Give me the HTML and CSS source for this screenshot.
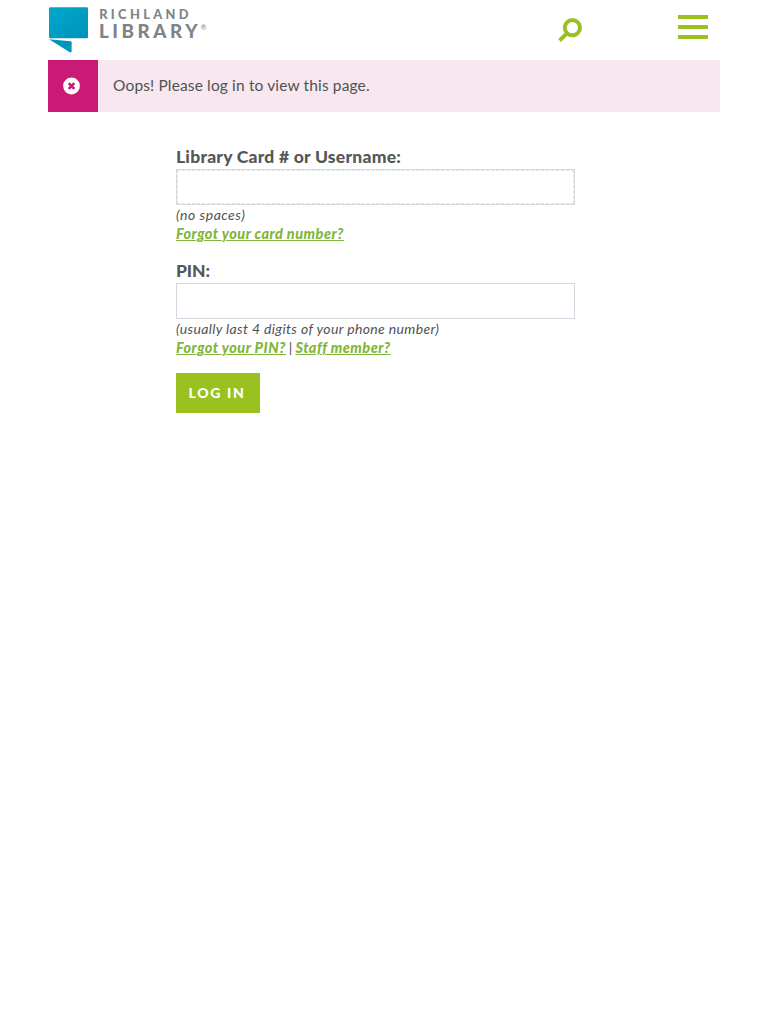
FILE: index.html
```html
<!DOCTYPE html>
<html lang="en">
<head>
<meta charset="utf-8">
<title>Richland Library</title>
<link rel="stylesheet" href="styles.css">
</head>
<body>
<header class="header">
  <a class="logo" aria-label="Richland Library">
    <svg width="160" height="60" viewBox="0 0 160 60">
      <defs>
        <linearGradient id="page" x1="0" y1="0" x2="1" y2="1"><stop offset="0" stop-color="#00a9cf"/><stop offset="1" stop-color="#0091b8"/></linearGradient>
      </defs>
      <rect x="1" y="7.2" width="39" height="31" rx="1.3" fill="url(#page)"/>
      <path d="M1 39.2 L22.6 41.2 Q23.6 41.3 23.6 42.3 L23.6 51 Q23.6 53 21.8 52.2 Z" fill="#0096bc"/>
      <g class="logo-text">
        <text class="logo-top" x="51.2" y="18.6" textLength="89.3">RICHLAND</text>
        <text class="logo-main" x="51" y="38" textLength="98.5">LIBRARY</text>
        <text class="logo-mark" x="152.5" y="29.5">®</text>
      </g>
    </svg>
  </a>
  <div class="actions">
    <svg class="search" width="26" height="26" viewBox="0 0 26 26">
      <circle cx="14.4" cy="10.7" r="7.6"/>
      <path d="M9.4 15.9 L1.6 23.5"/>
    </svg>
    <div class="menu"><span></span><span></span><span></span></div>
  </div>
</header>
<div class="alert">
  <div class="alert-icon">
    <svg width="18" height="18" viewBox="0 0 18 18"><circle cx="8.5" cy="9" r="8.4" fill="#fff"/><path d="M5.7 6.2 L11.3 11.8 M11.3 6.2 L5.7 11.8" stroke="#c91a75" stroke-width="2.6"/></svg>
  </div>
  <p class="alert-text"><span class="oops">Oops! Please log in to view this page.</span></p>
</div>
<form class="login">
  <label class="label label-card" for="card">Library Card # or Username:</label>
  <div class="field focused"><input id="card" type="text"></div>
  <div class="help"><span class="spaces">(no spaces)</span><br><a class="link-card">Forgot your card number?</a></div>
  <label class="label label-pin" for="pin">PIN:</label>
  <div class="field"><input id="pin" type="password"></div>
  <div class="help"><span class="digits">(usually last 4 digits of your phone number)</span><br><a class="link-pin">Forgot your PIN?</a><span class="bar">|</span><a class="link-staff">Staff member?</a></div>
  <button class="submit" type="button">LOG IN</button>
</form>
</body>
</html>
```
FILE: styles.css
```css
* { box-sizing: border-box; }
body { margin: 0; background: #fff; color: #4f5254; font-family: Lato, sans-serif; }
.header { height: 60px; padding: 0 60px 0 48px; display: flex; justify-content: space-between; }
.logo svg { display: block; }
.logo-text { fill: #808488; font-weight: 900; }
.logo-top { font-size: 12.8px; }
.logo-main { font-size: 18.8px; }
.logo-mark { font-size: 7.5px; font-weight: 400; }
.actions { display: flex; gap: 94px; }
.search { margin-top: 17px; fill: none; stroke: #99c221; stroke-width: 4; }
.menu { width: 30px; padding-top: 15px; display: flex; flex-direction: column; gap: 6px; }
.menu span { height: 4px; background: #99c221; }
.alert { height: 52px; margin: 0 48px; display: flex; background: #f8e7ee; }
.alert-icon { width: 50px; padding: 17px 0 0 15px; background: #c91a75; }
.alert-text { margin: 0; padding-left: 15px; font-size: 15.5px; line-height: 51px; }
.oops { letter-spacing: 0.14px; }
.login { width: 399px; margin: 34px 0 0 176px; }
.label { display: block; height: 23px; font-size: 17.5px; font-weight: 900; line-height: 22px; color: #55585a; white-space: nowrap; }
.label-card { letter-spacing: 0.24px; }
.label-pin { letter-spacing: -0.1px; }
.field { height: 36px; border: 1px solid #d3d8df; }
.field input { display: block; width: 100%; height: 100%; border: 0; outline: 0; padding: 0 8px; background: transparent; font: inherit; }
.focused input { border: 1px dashed #e0e3e7; }
.help { height: 55px; font-size: 14px; font-style: italic; line-height: 19px; white-space: nowrap; }
.spaces { letter-spacing: 0.53px; }
.digits { letter-spacing: 0.35px; }
.help a { color: #82b53b; font-size: 14.5px; font-weight: 900; line-height: 0; letter-spacing: 0.45px; text-decoration: underline; text-decoration-thickness: 1px; text-underline-offset: 1px; }
.bar { margin: 0 3px; }
.submit { display: block; width: 84px; height: 40px; margin-top: -1px; padding: 0 2px 2px 0; border: 0; background: #99c221; color: #fff; font: 900 14px Lato, sans-serif; letter-spacing: 1.7px; }
```
